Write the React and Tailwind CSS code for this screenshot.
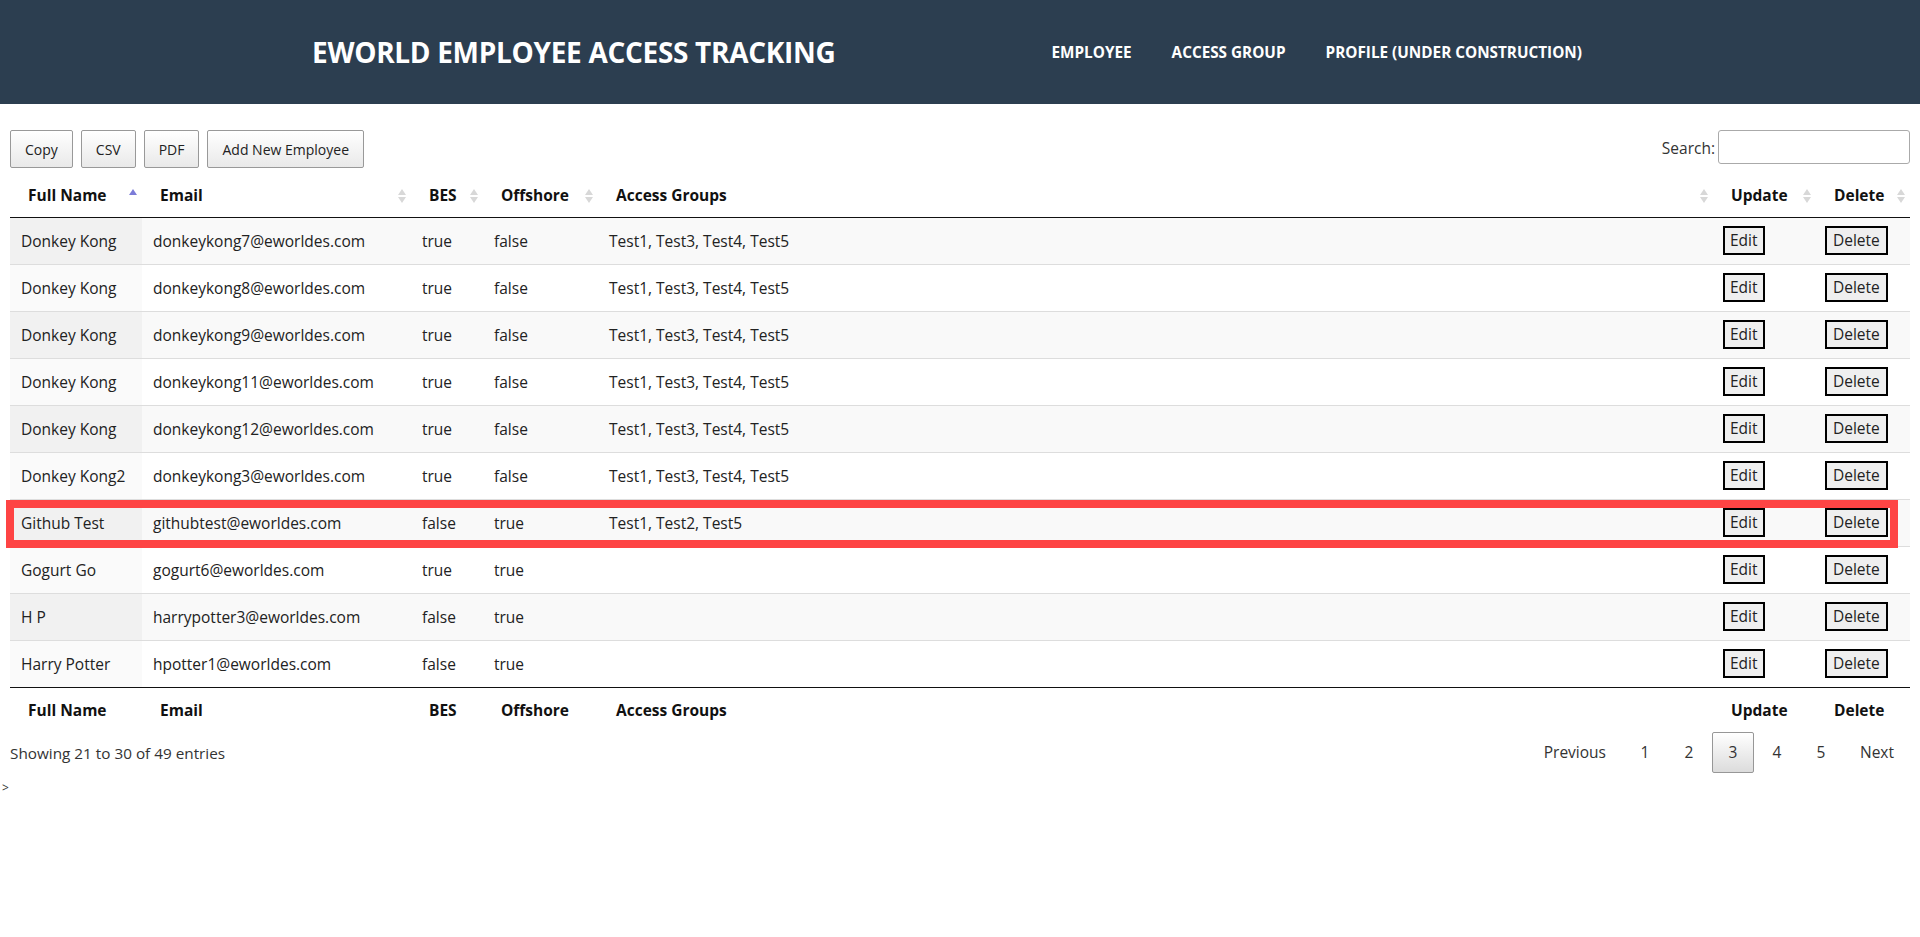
import React from 'react'

const ROWS = [
  { name: 'Donkey Kong', email: 'donkeykong7@eworldes.com', bes: 'true', off: 'false', groups: 'Test1, Test3, Test4, Test5' },
  { name: 'Donkey Kong', email: 'donkeykong8@eworldes.com', bes: 'true', off: 'false', groups: 'Test1, Test3, Test4, Test5' },
  { name: 'Donkey Kong', email: 'donkeykong9@eworldes.com', bes: 'true', off: 'false', groups: 'Test1, Test3, Test4, Test5' },
  { name: 'Donkey Kong', email: 'donkeykong11@eworldes.com', bes: 'true', off: 'false', groups: 'Test1, Test3, Test4, Test5' },
  { name: 'Donkey Kong', email: 'donkeykong12@eworldes.com', bes: 'true', off: 'false', groups: 'Test1, Test3, Test4, Test5' },
  { name: 'Donkey Kong2', email: 'donkeykong3@eworldes.com', bes: 'true', off: 'false', groups: 'Test1, Test3, Test4, Test5' },
  { name: 'Github Test', email: 'githubtest@eworldes.com', bes: 'false', off: 'true', groups: 'Test1, Test2, Test5' },
  { name: 'Gogurt Go', email: 'gogurt6@eworldes.com', bes: 'true', off: 'true', groups: '' },
  { name: 'H P', email: 'harrypotter3@eworldes.com', bes: 'false', off: 'true', groups: '' },
  { name: 'Harry Potter', email: 'hpotter1@eworldes.com', bes: 'false', off: 'true', groups: '' },
]

const COLS = [
  { label: 'Full Name', w: 'w-[132px]' },
  { label: 'Email', w: 'w-[269px]' },
  { label: 'BES', w: 'w-[72px]' },
  { label: 'Offshore', w: 'w-[115px]' },
  { label: 'Access Groups', w: 'w-auto' },
  { label: 'Update', w: 'w-[103px]' },
  { label: 'Delete', w: 'w-[94px]' },
]

function SortIcon({ active }) {
  if (active) {
    return (
      <svg width="8" height="14" viewBox="0 0 8 14" className="shrink-0">
        <polygon points="0,6 4,0 8,6" fill="#7c7cd8" />
      </svg>
    )
  }
  return (
    <svg width="8" height="14" viewBox="0 0 8 14" className="shrink-0">
      <polygon points="0,6 4,0 8,6" fill="#d8d8d8" />
      <polygon points="0,8 8,8 4,14" fill="#d8d8d8" />
    </svg>
  )
}

function ToolButton({ children }) {
  return (
    <button className="h-[38px] px-[14px] text-[14px] text-[#222] border border-[#999] rounded-[2px] bg-gradient-to-b from-white to-[#e9e9e9]">
      {children}
    </button>
  )
}

function PageButton({ children, current }) {
  return (
    <button
      className={`h-[41px] min-w-[42px] px-[15px] ml-[2px] border rounded-[2px] text-[15.5px] text-[#333] ${
        current ? 'border-[#979797] bg-gradient-to-b from-white to-[#dcdcdc]' : 'border-transparent'
      }`}
    >
      {children}
    </button>
  )
}

export default function App() {
  return (
    <div className="min-h-screen bg-white text-[#222] font-['Segoe_UI','Open_Sans',sans-serif]">
      {/* Header */}
      <header className="h-[104px] bg-[#2c3e50] flex items-center text-white">
        <h1 className="ml-[312px] text-[28px] font-bold tracking-[-0.3px]">EWORLD EMPLOYEE ACCESS TRACKING</h1>
        <nav className="ml-[216px] flex gap-[40px] text-[15.3px] font-bold">
          <a>EMPLOYEE</a>
          <a>ACCESS GROUP</a>
          <a>PROFILE (UNDER CONSTRUCTION)</a>
        </nav>
      </header>

      <div className="px-[10px] pt-[26px]">
        {/* Toolbar */}
        <div className="flex items-start justify-between">
          <div className="flex gap-[8px]">
            <ToolButton>Copy</ToolButton>
            <ToolButton>CSV</ToolButton>
            <ToolButton>PDF</ToolButton>
            <ToolButton>Add New Employee</ToolButton>
          </div>
          <label className="flex items-center text-[15.5px] text-[#333]">
            <span className="pt-[3px]">Search:</span>
            <input className="ml-[3px] w-[192px] h-[34px] border border-[#aaa] rounded-[3px] px-[5px] outline-none" />
          </label>
        </div>

        {/* Table */}
        <div className="relative">
          <table className="w-full table-fixed border-collapse text-[15.5px]">
            <colgroup>
              {COLS.map((c) => (
                <col key={c.label} className={c.w} />
              ))}
            </colgroup>
            <thead>
              <tr>
                {COLS.map((c, i) => (
                  <th key={c.label} className="h-[49px] pt-[7px] pl-[18px] pr-[5px] text-left font-bold text-[#111] border-b border-[#111] whitespace-nowrap">
                    <div className="flex items-center justify-between">
                      <span>{c.label}</span>
                      <SortIcon active={i === 0} />
                    </div>
                  </th>
                ))}
              </tr>
            </thead>
            <tbody>
              {ROWS.map((r, i) => {
                const odd = i % 2 === 0
                const rowBg = odd ? 'bg-[#f9f9f9]' : 'bg-white'
                const firstBg = odd ? 'bg-[#f1f1f1]' : 'bg-[#fafafa]'
                const border = i === 0 ? 'h-[47px]' : 'h-[47px] border-t border-[#ddd]'
                const txt = `${border} px-[11px] pt-[3px]`
                return (
                  <tr key={i} className={`${rowBg} whitespace-nowrap`}>
                    <td className={`${txt} ${firstBg}`}>{r.name}</td>
                    <td className={txt}>{r.email}</td>
                    <td className={txt}>{r.bes}</td>
                    <td className={txt}>{r.off}</td>
                    <td className={txt}>{r.groups}</td>
                    <td className={`${border} px-[10px]`}>
                      <button className="h-[29px] px-[5px] border-2 border-black bg-[#efefef] leading-none">Edit</button>
                    </td>
                    <td className={`${border} px-[9px]`}>
                      <button className="h-[29px] px-[6px] border-2 border-black bg-[#efefef] leading-none">Delete</button>
                    </td>
                  </tr>
                )
              })}
            </tbody>
            <tfoot>
              <tr>
                {COLS.map((c) => (
                  <th key={c.label} className="pt-[11px] pb-[8px] pl-[18px] text-left font-bold text-[#111] border-t border-[#111] whitespace-nowrap">
                    {c.label}
                  </th>
                ))}
              </tr>
            </tfoot>
          </table>
          {/* highlight annotation */}
          <div className="absolute left-[-4px] top-[332px] w-[1892px] h-[48px] border-[8px] border-[#fe4444] pointer-events-none" />
        </div>

        {/* Info + pagination */}
        <div className="flex items-center justify-between mt-[2px]">
          <div className="text-[15.3px] text-[#333] pt-[2px]">Showing 21 to 30 of 49 entries</div>
          <div className="flex items-center">
            <PageButton>Previous</PageButton>
            <PageButton>1</PageButton>
            <PageButton>2</PageButton>
            <PageButton current>3</PageButton>
            <PageButton>4</PageButton>
            <PageButton>5</PageButton>
            <PageButton>Next</PageButton>
          </div>
        </div>
      </div>
      <div className="text-[12px] leading-none mt-[9px] pl-[2px] text-[#333]">&gt;</div>
    </div>
  )
}
